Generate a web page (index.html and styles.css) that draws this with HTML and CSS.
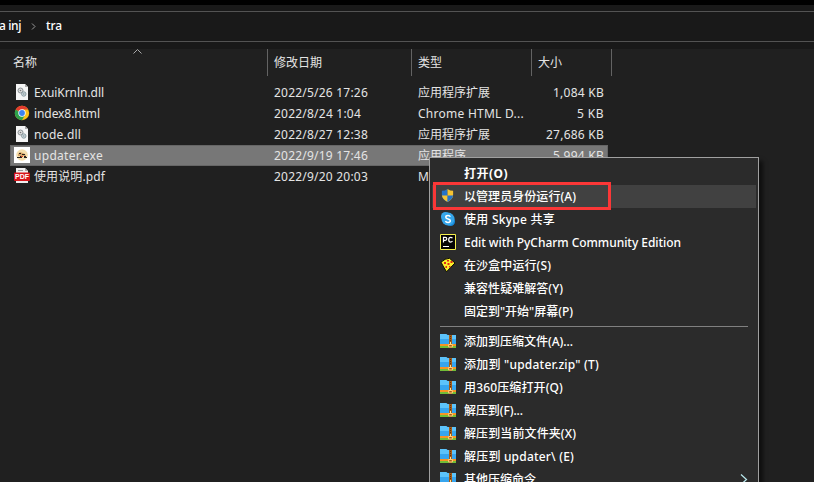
FILE: index.html
```html
<!DOCTYPE html>
<html lang="zh-CN">
<head>
<meta charset="utf-8">
<title>tra</title>
<link rel="stylesheet" href="styles.css">
</head>
<body>
<svg class="defs" aria-hidden="true">
  <symbol id="dll" viewBox="0 0 16 16">
    <path d="M2 0h9l3 3v13H2z" fill="#f5f5f5"/><path d="M11 0v3h3z" fill="#aaa"/>
    <circle cx="6.5" cy="6.500" r="2.5" fill="#ddd" stroke="#8b9295"/><circle cx="6.5" cy="6.500" r=".8" fill="#777"/>
    <circle cx="9.8" cy="10" r="2.2" fill="#ccdde3" stroke="#8b9a9f"/><circle cx="9.8" cy="10" r=".7" fill="#888"/>
  </symbol>
  <symbol id="chrome" viewBox="0 0 16 16">
    <circle cx="8" cy="8" r="7.200" fill="#fbc116"/>
    <path d="M8 8 1.760 4.4A7.2 7.2 0 0 0 8 15.2l3-5.3z" fill="#2da14c"/>
    <path d="M8 8 1.760 4.4A7.2 7.2 0 0 1 14.240 4.4H8z" fill="#e33b2e"/>
    <circle cx="8" cy="8" r="3.7" fill="#fff"/><circle cx="8" cy="8" r="2.9" fill="#3c83ee"/>
  </symbol>
  <symbol id="exe" viewBox="0 0 16 16">
    <path d="M0 0h16v16H0z" fill="#fff"/><circle cx="8" cy="8" r="5.8" fill="#f4dfae"/>
    <path d="M4 7l2-2 3 1 2 1 1 2H4z" fill="#d6a468"/><path d="M5 6h2v1H5zM8 7h3v1H8zM3 10h3V9h2v1h2V9h2v1h1v1h-3v-1H8v1H3z" fill="#292421"/><path d="M7 9h2v1H7z" fill="#d5482d"/>
  </symbol>
  <symbol id="pdf" viewBox="0 0 16 16">
    <path d="M2 0h9l3 3v12H2z" fill="#eee"/><path d="M11 0v3h3z" fill="#aaa"/><path d="M4 2h5v1H4z" fill="#999"/><rect y="4.500" width="16" height="8.500" rx="1" fill="#d9141b"/>
    <text x="8" y="11.300" text-anchor="middle" class="pdf-label">PDF</text>
  </symbol>
  <symbol id="shield" viewBox="0 0 16 16">
    <path d="M8 1Q5 3 2 3v4q0 5 6 8z" fill="#2673c8"/><path d="M8 1q3 2 6 2v4q0 5-6 8z" fill="#f7c331"/>
    <path d="M2 8h6v7Q2.600 12 2 8z" fill="#f7c331"/><path d="M8 8h6q-.6 4-6 7z" fill="#2673c8"/>
  </symbol>
  <symbol id="skype" viewBox="0 0 16 16">
    <circle cx="5.500" cy="5.500" r="4.500" fill="#3aa9ec"/><circle cx="10.500" cy="10.500" r="4.500" fill="#168ada"/><circle cx="8" cy="8" r="6.500" fill="#35a5e9"/>
    <path d="M10.300 5.800Q9.800 4.600 8 4.600 5.800 4.600 5.800 6.200q0 1.300 2.200 1.700t2.300 1.800q0 1.700-2.300 1.700-2 0-2.500-1.400" fill="none" stroke="#fff" stroke-width="1.500"/>
  </symbol>
  <symbol id="pycharm" viewBox="0 0 16 16">
    <path d="M.5.5h15v15H.5z" fill="#050505" stroke="#f5ef4d"/>
    <path d="M3.500 8.500V3.300h1.800q1.500 0 1.500 1.500t-1.500 1.500H3.500M12.500 4.200q-.8-.9-1.800-.9-2 0-2 2.400t2 2.400q1 0 1.800-.9" fill="none" stroke="#fff" stroke-width="1.200"/><path d="M3 12h6v1H3z" fill="#fff"/>
  </symbol>
  <symbol id="pizza" viewBox="0 0 16 16">
    <path d="M1 5.200Q5 1.300 9.500 1.300L15 6 6.500 14.800Q3.500 10 1 5.200z" fill="#faf029" stroke="#0b0b00"/>
    <path d="M4 5h2v2H4zM7 3h2v1.500H7zM10.500 4h2v2h-2zM7.500 6h2v2h-2zM5.500 9h1.500v2H5.500zM9 9h1.500v1.500H9z" fill="#df2b17"/>
  </symbol>
  <symbol id="zip" viewBox="0 -1 16 16">
    <path d="M0 0h6l1.500 1H16v12.500H0z" fill="#36a5ee"/><path d="M0 0h6l1.500 1H16v4H0z" fill="#5cc3fa"/>
    <path d="M0 10h16v2H0z" fill="#f79424"/><path d="M0 12h16v2H0z" fill="#72bd36"/>
    <path d="M9 1h3v13H9z" fill="#a65c16"/><path d="M10 2h1v1h-1zM10 4h1v1h-1zM10 6h1v1h-1z" fill="#563015"/>
    <path d="M10.500 8v3" stroke="#ffe49c"/><path d="M8.700 10.500h3.600v2.500H8.700z" fill="none" stroke="#ffd27c"/>
  </symbol>
</svg>
<main class="window">
  <div class="titlebar"></div>
  <nav class="path"><span class="crumb"><span class="fit" data-w="22">a inj</span></span><svg class="sep" viewBox="0 0 5 7"><path d="M1 .5l3 3-3 3"/></svg><span class="fit" data-w="16">tra</span></nav>
  <div class="gap"></div>
  <section class="files">
    <header class="head">
      <span>名称<svg class="sort" viewBox="0 0 9 5"><path d="M.5 4.500l4-4 4 4"/></svg></span><span>修改日期</span><span>类型</span><span>大小</span>
    </header>
    <div class="row"><svg><use href="#dll"/></svg><span class="name"><span class="fit" data-w="70">ExuiKrnln.dll</span></span><span><span class="fit" data-w="94">2022/5/26 17:26</span></span><span>应用程序扩展</span><span class="size"><span class="fit" data-w="51">1,084 KB</span></span></div>
    <div class="row"><svg><use href="#chrome"/></svg><span class="name"><span class="fit" data-w="66">index8.html</span></span><span><span class="fit" data-w="87">2022/8/24 1:04</span></span><span><span class="fit" data-w="106">Chrome HTML D...</span></span><span class="size"><span class="fit" data-w="27">5 KB</span></span></div>
    <div class="row"><svg><use href="#dll"/></svg><span class="name"><span class="fit" data-w="47">node.dll</span></span><span><span class="fit" data-w="94">2022/8/27 12:38</span></span><span>应用程序扩展</span><span class="size"><span class="fit" data-w="58">27,686 KB</span></span></div>
    <div class="row selected"><svg><use href="#exe"/></svg><span class="name"><span class="fit" data-w="69">updater.exe</span></span><span><span class="fit" data-w="94">2022/9/19 17:46</span></span><span>应用程序</span><span class="size"><span class="fit" data-w="51">5,994 KB</span></span></div>
    <div class="row"><svg><use href="#pdf"/></svg><span class="name"><span class="fit" data-w="71">使用说明.pdf</span></span><span><span class="fit" data-w="94">2022/9/20 20:03</span></span><span>M</span><span class="size"></span></div>
  </section>
</main>
<aside class="menu">
  <div class="item default"><i></i><span class="fit" data-w="44">打开(O)</span></div>
  <div class="item hover"><svg class="small"><use href="#shield"/></svg><span class="fit" data-w="112">以管理员身份运行(A)</span></div>
  <div class="item"><svg><use href="#skype"/></svg><span class="fit" data-w="91">使用 Skype 共享</span></div>
  <div class="item"><svg><use href="#pycharm"/></svg><span class="fit" data-w="217">Edit with PyCharm Community Edition</span></div>
  <div class="item"><svg><use href="#pizza"/></svg><span class="fit" data-w="87">在沙盒中运行(S)</span></div>
  <div class="item"><i></i><span class="fit" data-w="99">兼容性疑难解答(Y)</span></div>
  <div class="item"><i></i><span class="fit" data-w="109">固定到"开始"屏幕(P)</span></div>
  <hr>
  <div class="item"><svg><use href="#zip"/></svg><span class="fit" data-w="109">添加到压缩文件(A)...</span></div>
  <div class="item"><svg><use href="#zip"/></svg><span class="fit" data-w="135">添加到 "updater.zip" (T)</span></div>
  <div class="item"><svg><use href="#zip"/></svg><span class="fit" data-w="99">用360压缩打开(Q)</span></div>
  <div class="item"><svg><use href="#zip"/></svg><span class="fit" data-w="59">解压到(F)...</span></div>
  <div class="item"><svg><use href="#zip"/></svg><span class="fit" data-w="112">解压到当前文件夹(X)</span></div>
  <div class="item"><svg><use href="#zip"/></svg><span class="fit" data-w="110">解压到 updater\ (E)</span></div>
  <div class="item"><svg><use href="#zip"/></svg><span>其他压缩命令</span><svg class="arrow" viewBox="0 0 8 11"><path d="M1 .5l5.500 5-5.500 5"/></svg></div>
</aside>
<div class="callout"></div>
<script src="fit.js"></script>
</body>
</html>
```
FILE: styles.css
```css
* { box-sizing: border-box; }
body { margin: 0; width: 814px; height: 482px; overflow: hidden; background: #202020; color: #e4e4e4; font: 12px/21px "Noto Sans", "Noto Sans CJK SC", sans-serif; white-space: nowrap; }
.defs { position: absolute; width: 0; height: 0; }
.titlebar { height: 5px; background: #000; }
.path { height: 37px; padding-top: 6px; display: flex; align-items: center; background: linear-gradient(#191919 6px, #535353 6px, #535353 7px, #191919 7px); border-bottom: 1px solid #535353; color: #fff; font-weight: 500; }
.crumb { width: 31px; margin-left: -1px; margin-right: 1px; }
.path > .fit, .crumb { position: relative; top: -1px; }
.sep { width: 5px; height: 7px; margin-right: 10px; fill: none; stroke: #999; }
.gap { height: 7px; background: #191919; }
.files { height: 433px; }
.head { display: grid; grid-template-columns: 268px 144px 120px 80px; width: 612px; height: 27px; line-height: 27px; margin-bottom: 6px; }
.head > span { border-right: 1px solid #636363; padding-left: 6px; position: relative; }
.head > span:first-child { padding-left: 13px; }
.sort { position: absolute; left: 133px; top: 0; width: 9px; height: 5px; fill: none; stroke: #aaa; }
.row { display: grid; grid-template-columns: 24px 240px 144px 120px 69px; width: 598px; height: 21px; margin-left: 10px; align-items: center; }
.row > svg { width: 16px; height: 16px; margin: 0 0 1px 4px; }
.size { text-align: right; padding-right: 3px; }
.selected { background: #777; box-shadow: inset 0 0 0 1px #666; }
.pdf-label { font: bold 7px "Liberation Sans", sans-serif; fill: #fff; }
.fit { display: inline-block; }
.menu { position: absolute; left: 429px; top: 157px; width: 330px; height: 340px; background: #2b2b2b; border: 1px solid #a0a0a0; padding: 4px 2px; color: #fff; font-weight: 500; box-shadow: 4px 4px 4px rgba(0,0,0,.55); }
.item { height: 23px; line-height: 23px; display: flex; align-items: center; padding-left: 8px; }
.item > svg:first-child, .item > i { width: 16px; height: 16px; margin: 0 8px 1px 0; flex: none; }
.item > svg.small:first-child { width: 15px; height: 15px; margin: 0 9px 2px 0; }
.hover { background: #414141; }
.default { font-weight: bold; }
hr { height: 1px; border: 0; background: #808080; margin: 3px 8px; }
.item .arrow { width: 8px; height: 11px; margin-left: auto; margin-right: 8px; fill: none; stroke: #b9e8ed; stroke-width: 1.2; }
.callout { position: absolute; left: 433px; top: 182px; width: 178px; height: 28px; border: 3px solid #fb3737; }
```
FILE: fit.js
```js
// Distributes column text evenly over its designated width.
document.querySelectorAll('.fit').forEach(el => {
  const wanted = Number(el.dataset.w);
  const count = [...el.textContent].length;
  const spacing = (wanted - el.getBoundingClientRect().width) / count;
  el.style.letterSpacing = spacing + 'px';
});
```
